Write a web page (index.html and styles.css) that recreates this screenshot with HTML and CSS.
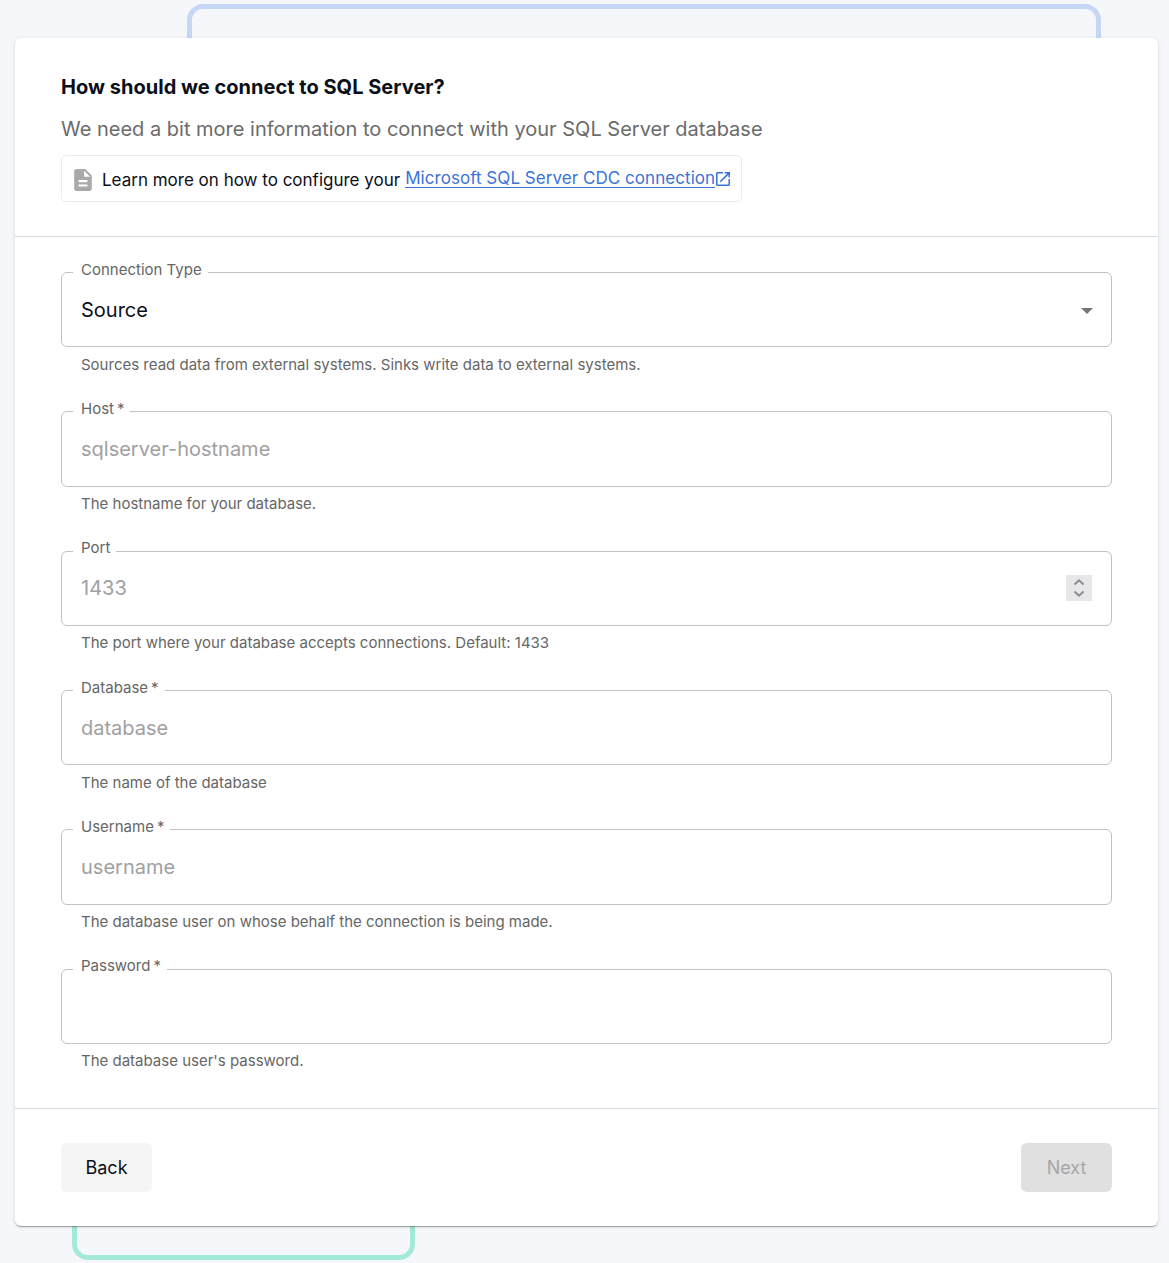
FILE: index.html
```html
<!DOCTYPE html>
<html lang="en">
<head>
    <meta charset="UTF-8">
    <meta name="viewport" content="width=device-width, initial-scale=1.0">
    <title>Connect to SQL Server</title>
    <link rel="stylesheet" href="styles.css">
</head>
<body>
    <div class="frame frame-blue"></div>
    <div class="frame frame-green"></div>
    <main class="card">
        <header class="card-header">
            <h1>How should we connect to SQL Server?</h1>
            <p class="subtitle">We need a bit more information to connect with your SQL Server database</p>
            <div class="docs">
                <svg class="docs-icon" viewBox="4 2 16 20"><path d="M14 2H6c-1.100 0-1.990.9-1.990 2L4 20c0 1.100.89 2 1.990 2H18c1.100 0 2-.9 2-2V8l-6-6zm2 16H8v-2h8v2zm0-4H8v-2h8v2zm-3-5V3.500L18.500 9H13z"/></svg>
                <span class="docs-text">Learn more on how to configure your</span>
                <a class="docs-link" href="#"><span>Microsoft SQL Server CDC connection</span><svg viewBox="3 3 18 18"><path d="M19 19H5V5h7V3H5c-1.110 0-2 .9-2 2v14c0 1.100.89 2 2 2h14c1.100 0 2-.9 2-2v-7h-2v7zM14 3v2h3.590l-9.830 9.830 1.410 1.410L19 6.410V10h2V3h-7z"/></svg></a>
            </div>
        </header>
        <form class="card-content">
            <div class="field">
                <div class="field-box">
                    <label>Connection Type</label>
                    <div class="select">Source</div>
                    <svg class="arrow" viewBox="7 10 10 5"><path d="M7 10l5 5 5-5z"/></svg>
                </div>
                <p class="helper">Sources read data from external systems. Sinks write data to external systems.</p>
            </div>
            <div class="field">
                <div class="field-box">
                    <label for="host">Host<span class="star">*</span></label>
                    <input id="host" type="text" placeholder="sqlserver-hostname">
                </div>
                <p class="helper">The hostname for your database.</p>
            </div>
            <div class="field">
                <div class="field-box">
                    <label for="port">Port</label>
                    <input id="port" type="text" inputmode="numeric" placeholder="1433">
                    <div class="spinner">
                        <svg viewBox="0 0 26 26"><path d="M8.500 9.500L13 5.300l4.500 4.200M8.500 16.500l4.500 4.200 4.500-4.200"/></svg>
                    </div>
                </div>
                <p class="helper">The port where your database accepts connections. Default: 1433</p>
            </div>
            <div class="field">
                <div class="field-box">
                    <label for="database">Database<span class="star">*</span></label>
                    <input id="database" type="text" placeholder="database">
                </div>
                <p class="helper">The name of the database</p>
            </div>
            <div class="field">
                <div class="field-box">
                    <label for="username">Username<span class="star">*</span></label>
                    <input id="username" type="text" placeholder="username">
                </div>
                <p class="helper">The database user on whose behalf the connection is being made.</p>
            </div>
            <div class="field">
                <div class="field-box">
                    <label for="password">Password<span class="star">*</span></label>
                    <input id="password" type="password">
                </div>
                <p class="helper">The database user's password.</p>
            </div>
        </form>
        <footer class="card-footer">
            <button class="btn btn-back" type="button">Back</button>
            <button class="btn btn-next" type="button" disabled>Next</button>
        </footer>
    </main>
</body>
</html>
```
FILE: styles.css
```css
* { margin: 0; padding: 0; box-sizing: border-box; }
body { position: relative; height: 1263px; padding: 38px 11px 0 15px; background-color: #f5f7fb; color: #0b0f19; font-family: Inter, 'Liberation Sans', sans-serif; overflow: hidden; }

/* decorative outlines behind the card */
.frame { position: absolute; border: 5px solid; border-radius: 16px; }
.frame-blue { top: 4px; left: 187px; width: 914px; height: 200px; border-color: #c5d7f5; }
.frame-green { bottom: 3px; left: 72px; width: 343px; height: 200px; border-color: #a2ead7; }

.card { position: relative; height: 1188px; display: flex; flex-direction: column; background-color: #ffffff; border-radius: 6px; box-shadow: 0 2px 1px -1px rgba(0, 0, 0, 0.2), 0 1px 1px rgba(0, 0, 0, 0.14), 0 1px 4px rgba(0, 0, 0, 0.12); }
.card-header { height: 199px; padding: 34px 46px 0; border-bottom: 1px solid #dcdfe2; }
.card-header h1 { font-size: 20px; line-height: 30px; font-weight: 700; letter-spacing: 0.02px; }
.subtitle { margin-top: 12px; font-size: 20px; line-height: 30px; color: #6b6b6b; }
.docs { display: inline-flex; align-items: center; height: 47px; margin-top: 11px; padding: 0 10px 0 12px; border: 1px solid #ececee; border-radius: 5px; font-size: 17px; line-height: 26px; white-space: nowrap; }
.docs-icon { width: 18px; height: 22px; margin: 2px 10px 0 0; fill: #a9a9a9; }
.docs-text { margin: 2px 5px 0 0; }
.docs-link { display: flex; align-items: center; color: #3b73d9; text-decoration: none; letter-spacing: 0.05px; }
.docs-link span { line-height: 18px; border-bottom: 1px solid #3b73d9; }
.docs-link svg { width: 14px; height: 14px; margin: 1px 1px 0; fill: #3b73d9; }

.card-content { flex: 1; display: flex; flex-direction: column; padding: 35px 46px 0; }
.field { height: 139.350px; }
.field-box { position: relative; display: flex; align-items: center; height: 75.480px; padding: 0 19px; border: 1px solid #c2c2c2; border-radius: 6px; }
.field-box label { position: absolute; top: -14.300px; left: 11px; padding: 0 6px 0 8px; background-color: #ffffff; font-size: 15px; line-height: 22px; color: #666666; white-space: nowrap; }
.star { margin-left: 3px; }
.field-box input, .select { flex: 1; width: 100%; border: none; outline: none; background: none; font-family: inherit; font-size: 20px; line-height: 30px; color: #0b0f19; }
.field-box input::placeholder { color: #a0a0a2; opacity: 1; }
.arrow { width: 12px; height: 6px; margin: 2px -1px 0 0; fill: #757575; }
.spinner { width: 26px; height: 26px; background-color: #e7e7ea; }
.spinner svg { display: block; width: 26px; height: 26px; fill: none; stroke: #8c8c90; stroke-width: 2; }
.helper { margin: 5.300px 20px 0; font-size: 15px; line-height: 24px; color: #666666; }

.card-footer { display: flex; justify-content: space-between; height: 118px; padding: 34px 46px 0; border-top: 1px solid #dcdfe2; }
.btn { width: 91px; height: 49px; border: none; border-radius: 6px; font-family: inherit; font-size: 18px; }
.btn-back { background-color: #f5f5f5; color: #0b0f19; }
.btn-next { background-color: #e0e0e0; color: #a6a6a6; }
```
